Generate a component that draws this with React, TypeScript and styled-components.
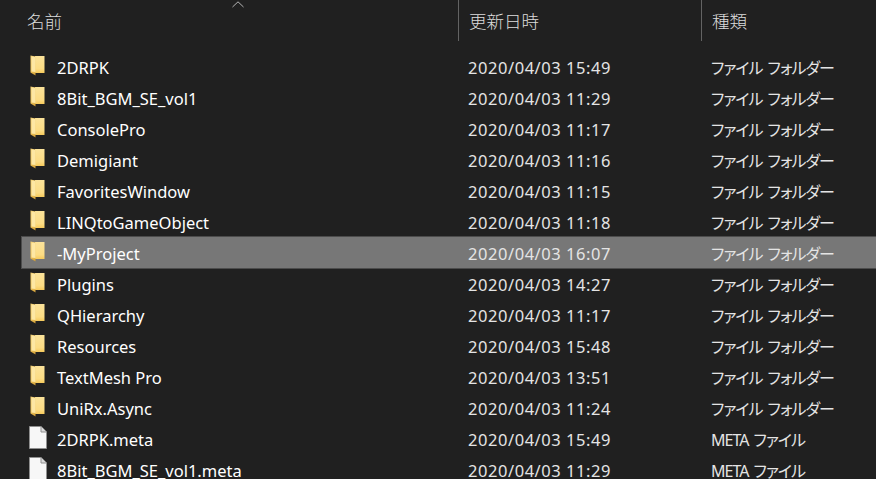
import React from "react"
import styled, { createGlobalStyle } from "styled-components"

const GlobalStyle = createGlobalStyle`
  html, body {
    margin: 0;
    padding: 0;
    height: 100%;
    overflow: hidden;
    background: #202020;
  }
`

const fontStack = `"Noto Sans", "Noto Sans CJK JP", sans-serif`

const Window = styled.div`
  width: 876px;
  height: 479px;
  overflow: hidden;
  background: #202020;
  font-family: ${fontStack};
  position: relative;
`

const Header = styled.div`
  display: grid;
  grid-template-columns: 458px 243px 1fr;
  height: 41px;
`

const HeaderCell = styled.div<{ $divided?: boolean; $inset: number }>`
  display: flex;
  align-items: center;
  padding-left: ${(props) => props.$inset}px;
  padding-bottom: 1px;
  font-size: 17.5px;
  font-weight: 300;
  color: #dcdcdc;
  border-left: ${(props) => (props.$divided ? "1px solid #636363" : "none")};
`

const SortArrow = styled.svg`
  position: absolute;
  left: 232px;
  top: 1px;
`

const List = styled.div`
  padding: 10px 0 0 22px;
`

const Row = styled.div<{ $selected?: boolean }>`
  display: grid;
  grid-template-columns: 436px 243px 1fr;
  align-items: center;
  height: 31px;
  padding-top: 1px;
  box-sizing: border-box;
  font-size: 16.5px;
  color: #fff;
  background: ${(props) => (props.$selected ? "#777777" : "transparent")};
  box-shadow: ${(props) =>
    props.$selected ? "0 0 0 1px #4c4c4c" : "none"};
`

const NameCell = styled.div`
  display: flex;
  align-items: center;
  padding-left: 8px;
  gap: 11px;
  white-space: nowrap;
`

const DateCell = styled.div`
  padding-left: 10px;
  white-space: nowrap;
  letter-spacing: 0.55px;
  color: #e4e4e4;
`

const KindCell = styled.div`
  padding-left: 10px;
  white-space: nowrap;
  font-size: 16px;
  font-feature-settings: "palt";
  letter-spacing: -1px;
  word-spacing: 2px;
  color: #e4e4e4;
`

const IconSlot = styled.svg`
  flex: none;
  display: block;
  margin-top: -4px;
`

const FileGlyph = styled(IconSlot)`
  margin-left: -1px;
  margin-right: -1px;
`

const FolderIcon = () => (
  <IconSlot width="16" height="21" viewBox="0 0 16 21">
    <defs>
      <linearGradient id="folderBack" x1="0" y1="0" x2="0" y2="1">
        <stop offset="0" stopColor="#fbe39a" />
        <stop offset="0.75" stopColor="#fcdc84" />
        <stop offset="1" stopColor="#f6ca5c" />
      </linearGradient>
      <linearGradient id="folderFlap" x1="0" y1="0" x2="0" y2="1">
        <stop offset="0" stopColor="#f4cf70" />
        <stop offset="0.8" stopColor="#ecc057" />
        <stop offset="1" stopColor="#c9952f" />
      </linearGradient>
    </defs>
    <path d="M5 1 H14.5 V18 H5 Z" fill="url(#folderBack)" />
    <path d="M0.5 0.5 L5.5 1.5 V20.5 L0.5 17.5 Z" fill="url(#folderFlap)" />
    <path d="M1.5 1.5 L5.5 2 V17 L1.5 16.5 Z" fill="#fde7a4" />
  </IconSlot>
)

const FileIcon = () => (
  <FileGlyph width="18" height="23" viewBox="0 0 18 23">
    <path d="M0.5 0.5 H12 L17.5 6 V22.5 H0.5 Z" fill="#f7f7f7" stroke="#8f8f8f" />
    <path d="M12 0.5 V6 H17.5" fill="#dcdcdc" stroke="#8f8f8f" />
  </FileGlyph>
)

interface FileEntry {
  name: string
  date: string
  kind: string
  isFile?: boolean
  selected?: boolean
}

const folderKind = "ファイル フォルダー"
const metaKind = "META ファイル"

const entries: FileEntry[] = [
  { name: "2DRPK", date: "2020/04/03 15:49", kind: folderKind },
  { name: "8Bit_BGM_SE_vol1", date: "2020/04/03 11:29", kind: folderKind },
  { name: "ConsolePro", date: "2020/04/03 11:17", kind: folderKind },
  { name: "Demigiant", date: "2020/04/03 11:16", kind: folderKind },
  { name: "FavoritesWindow", date: "2020/04/03 11:15", kind: folderKind },
  { name: "LINQtoGameObject", date: "2020/04/03 11:18", kind: folderKind },
  { name: "-MyProject", date: "2020/04/03 16:07", kind: folderKind, selected: true },
  { name: "Plugins", date: "2020/04/03 14:27", kind: folderKind },
  { name: "QHierarchy", date: "2020/04/03 11:17", kind: folderKind },
  { name: "Resources", date: "2020/04/03 15:48", kind: folderKind },
  { name: "TextMesh Pro", date: "2020/04/03 13:51", kind: folderKind },
  { name: "UniRx.Async", date: "2020/04/03 11:24", kind: folderKind },
  { name: "2DRPK.meta", date: "2020/04/03 15:49", kind: metaKind, isFile: true },
  { name: "8Bit_BGM_SE_vol1.meta", date: "2020/04/03 11:29", kind: metaKind, isFile: true },
]

const App: React.FC = () => {
  return (
    <Window>
      <GlobalStyle />
      <Header>
        <HeaderCell $inset={27}>名前</HeaderCell>
        <HeaderCell $divided $inset={10}>更新日時</HeaderCell>
        <HeaderCell $divided $inset={10}>種類</HeaderCell>
      </Header>
      <SortArrow width="12" height="7" viewBox="0 0 12 7">
        <path d="M0.5 6 L6 0.8 L11.5 6" fill="none" stroke="#b4b4b4" strokeWidth="1" />
      </SortArrow>
      <List>
        {entries.map((entry) => (
          <Row key={entry.name} $selected={entry.selected}>
            <NameCell>
              {entry.isFile ? <FileIcon /> : <FolderIcon />}
              {entry.name}
            </NameCell>
            <DateCell>{entry.date}</DateCell>
            <KindCell>{entry.kind}</KindCell>
          </Row>
        ))}
      </List>
    </Window>
  )
}

export default App
